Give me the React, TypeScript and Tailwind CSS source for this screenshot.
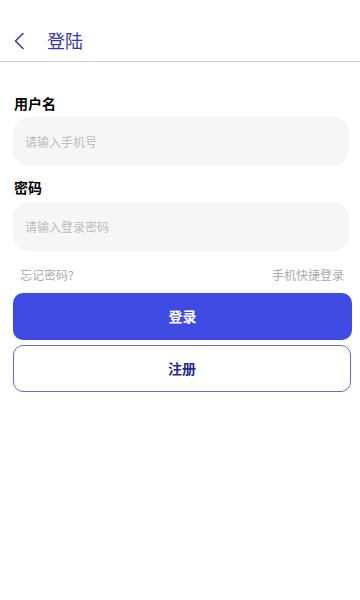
import { useState } from 'react';

const font = { fontFamily: '"Noto Sans CJK SC", "Liberation Sans", sans-serif' };

export default function App() {
    const [phone, setPhone] = useState('');
    const [password, setPassword] = useState('');

    return (
        <div className="w-[360px] h-[600px] bg-white" style={font}>
            <header className="h-[62px] pt-[20px] flex items-center border-b border-[#cfcfcf]">
                <button className="w-[47px] h-full flex items-center pl-[13px] text-[#3a3ba0]">
                    <svg width="12" height="18" viewBox="0 0 12 18" fill="none">
                        <path d="M10 1.5 L2.5 9 L10 16.5" stroke="currentColor" strokeWidth="1.6" strokeLinecap="round" strokeLinejoin="round" />
                    </svg>
                </button>
                <h1 className="text-[18px] leading-none text-[#3a3ba0] mt-[-2px]">登陆</h1>
            </header>

            <main className="px-[13px] pt-[31px]">
                <label className="block pl-[1px] text-[14px] leading-[20px] font-bold text-black">用户名</label>
                <input
                    value={phone}
                    onChange={(e) => setPhone(e.target.value)}
                    placeholder="请输入手机号"
                    className="mt-[4px] w-[336px] h-[49px] rounded-[16px] bg-[#f6f6f6] px-[12px] text-[12px] outline-none placeholder:text-[#bdbdbd]"
                />

                <label className="block pl-[1px] mt-[11px] text-[14px] leading-[20px] font-bold text-black">密码</label>
                <input
                    type="password"
                    value={password}
                    onChange={(e) => setPassword(e.target.value)}
                    placeholder="请输入登录密码"
                    className="mt-[5px] w-[336px] h-[49px] rounded-[16px] bg-[#f6f6f6] px-[12px] text-[12px] outline-none placeholder:text-[#bdbdbd]"
                />

                <div className="mt-[16px] flex items-center justify-between pl-[7px] pr-[3px] text-[12px] leading-[16px] text-[#ababab]">
                    <span>忘记密码?</span>
                    <span>手机快捷登录</span>
                </div>

                <button className="mt-[10px] w-[339px] h-[47px] rounded-[10px] bg-[#3f4ae2] text-white text-[14px] font-bold">
                    登录
                </button>
                <button className="mt-[5px] w-[338px] h-[47px] rounded-[10px] border border-[#6a6ac4] bg-white text-[#262b8e] text-[14px] font-bold">
                    注册
                </button>
            </main>
        </div>
    );
}
